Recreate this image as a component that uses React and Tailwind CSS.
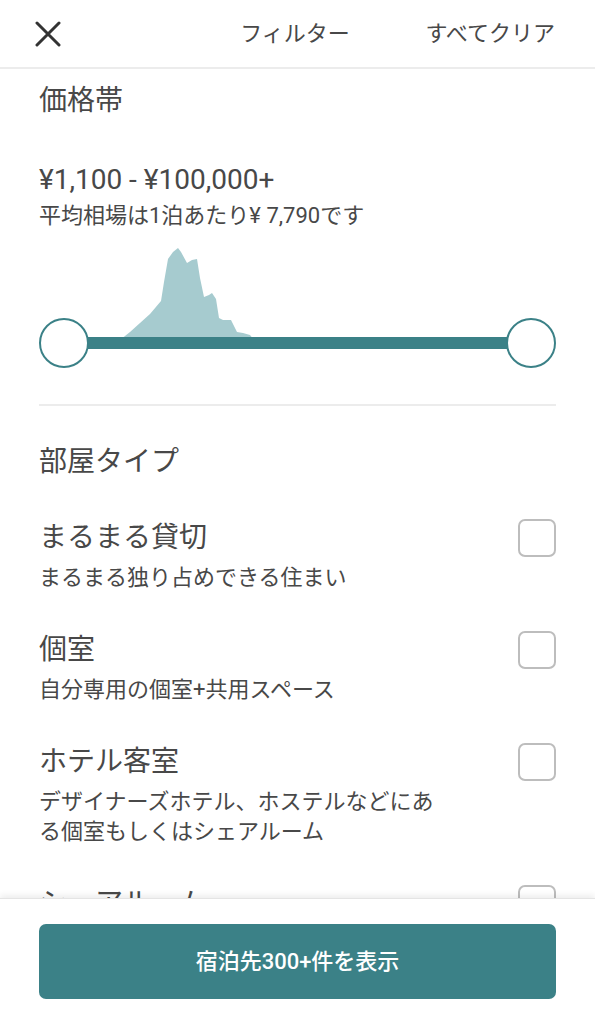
const FONT = { fontFamily: 'Roboto, "Noto Sans CJK JP", sans-serif' };

// histogram outline, in px of the slider box (box starts at x=39, y=229)
const HIST = [
  [120, 340], [130, 332], [140, 323], [150, 314], [161, 301], [164, 282], [168, 259],
  [173, 252], [178, 248], [181, 252], [187, 263], [192, 260], [197, 259], [200, 278],
  [204, 297], [209, 295], [212, 293], [216, 299], [219, 318], [223, 320], [231, 320],
  [237, 332], [243, 333], [250, 335], [254, 340],
].map(([x, y]) => `${x - 39},${y - 229}`).join(' ');

const ROOMS = [
  { title: 'まるまる貸切', desc: 'まるまる独り占めできる住まい' },
  { title: '個室', desc: '自分専用の個室+共用スペース' },
  { title: 'ホテル客室', desc: 'デザイナーズホテル、ホステルなどにある個室もしくはシェアルーム' },
  { title: 'シェアルーム', desc: '他のゲストと共用のスペース' },
];

function CloseIcon() {
  return (
    <svg width="26" height="26" viewBox="0 0 26 26" fill="none" stroke="#333" strokeWidth="3" strokeLinecap="round">
      <path d="M2 2 L24 24 M24 2 L2 24" />
    </svg>
  );
}

function Checkbox() {
  return <div className="w-[38px] h-[38px] shrink-0 rounded-[7px] border-2 border-[#bdbdbd] bg-white" />;
}

export default function App() {
  return (
    <div className="h-[1024px] w-full flex flex-col overflow-hidden bg-white text-[#484848]" style={FONT}>
      {/* header */}
      <header className="h-[69px] shrink-0 grid grid-cols-[1fr_auto_1fr] items-center pl-[35px] pr-[40px] border-b-2 border-[#ececec]">
        <CloseIcon />
        <span className="text-[22px]">フィルター</span>
        <span className="text-[22px] justify-self-end">すべてクリア</span>
      </header>

      <main className="flex-1 overflow-hidden px-[39px]">
        <h2 className="mt-[12px] text-[28px] leading-[40px]">価格帯</h2>
        <p className="mt-[43px] text-[28px] leading-[32px]">¥1,100 - ¥100,000+</p>
        <p className="mt-[7px] text-[22px] leading-[26px]">平均相場は1泊あたり¥ 7,790です</p>

        <div className="relative h-[140px]">
          <svg className="absolute inset-0" width="517" height="140" viewBox="0 0 517 140">
            <polygon points={HIST} fill="#a6cbcf" />
          </svg>
          <div className="absolute left-[25px] right-[25px] top-[108px] h-[12px] bg-[#3b8187]" />
          <div className="absolute left-0 top-[89px] w-[50px] h-[50px] rounded-full border-2 border-[#3b8187] bg-white" />
          <div className="absolute right-0 top-[89px] w-[50px] h-[50px] rounded-full border-2 border-[#3b8187] bg-white" />
        </div>

        <div className="mt-[35px] h-[2px] bg-[#ececec]" />

        <h2 className="mt-[36px] text-[28px] leading-[40px]">部屋タイプ</h2>

        <div className="mt-[36px] flex flex-col gap-[37px]">
          {ROOMS.map((r) => (
            <div key={r.title} className="flex justify-between items-start">
              <div>
                <div className="text-[28px] leading-[40px]">{r.title}</div>
                <div className="mt-[5px] max-w-[402px] text-[22px] leading-[30px]">{r.desc}</div>
              </div>
              <div className="pt-[1px]">
                <Checkbox />
              </div>
            </div>
          ))}
        </div>
      </main>

      {/* footer */}
      <footer className="h-[126px] shrink-0 px-[39px] pt-[25px] bg-white shadow-[0_-3px_6px_rgba(0,0,0,0.07)] border-t border-[#e4e4e4] relative">
        <button className="w-full h-[75px] rounded-[7px] bg-[#3b8187] text-white text-[22px] font-medium">
          宿泊先300+件を表示
        </button>
      </footer>
    </div>
  );
}
